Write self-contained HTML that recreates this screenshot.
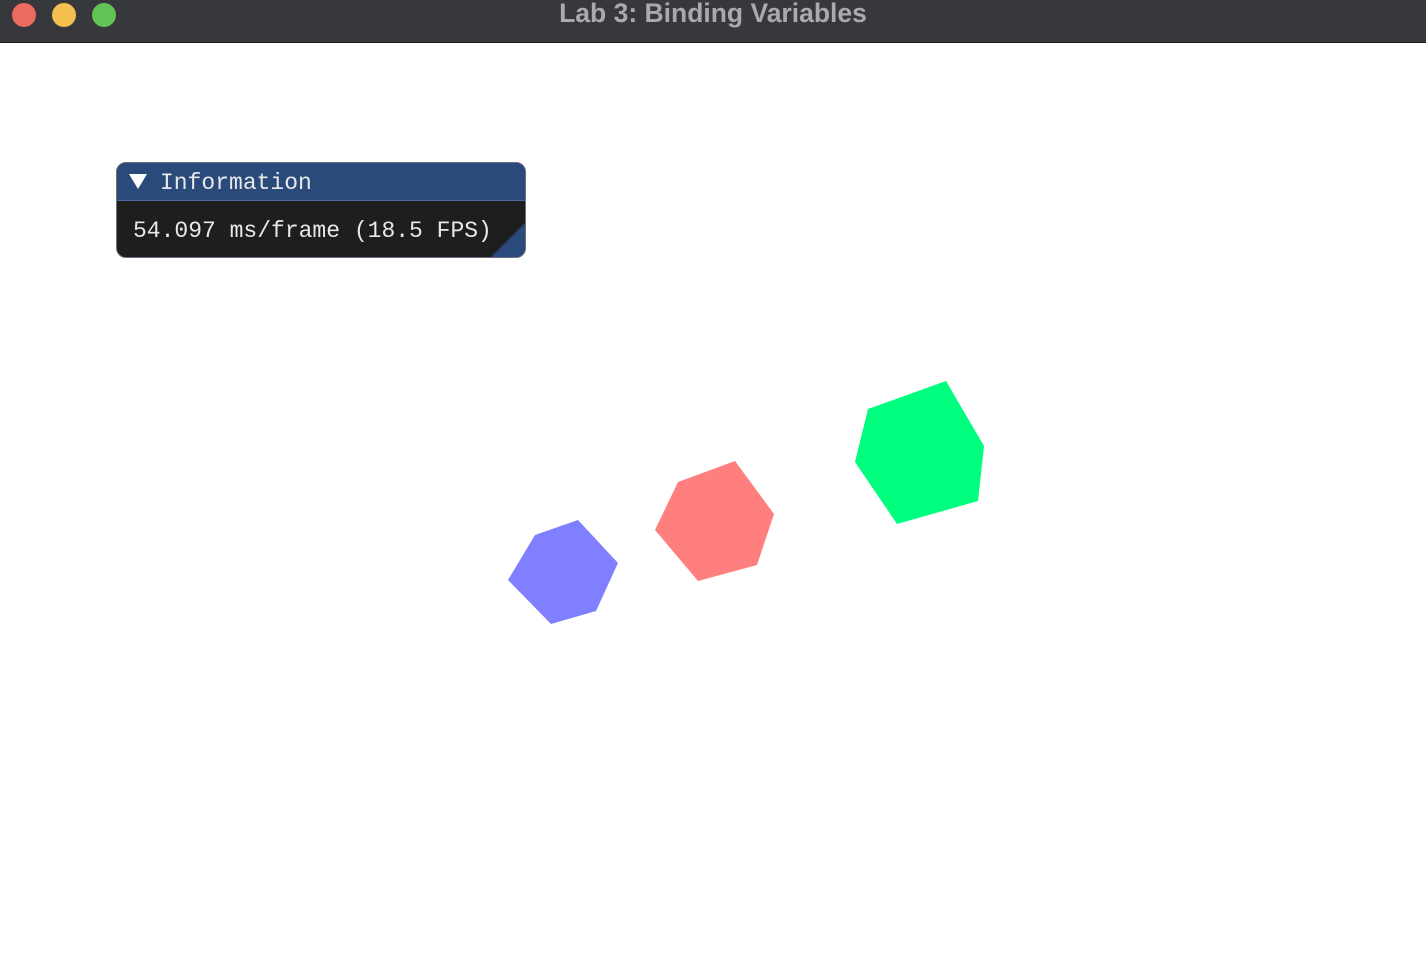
<!DOCTYPE html>
<html><head><style>
body{margin:0;width:1426px;height:964px;background:#fff;position:relative;overflow:hidden;font-family:"Liberation Sans",sans-serif}
.tb{position:absolute;left:0;top:0;width:1426px;height:42px;background:#37383c;border-bottom:1px solid #1a1a1a}
.dot{position:absolute;top:3px;width:24px;height:24px;border-radius:50%}
.title{position:absolute;top:-2px;left:0;width:1426px;text-align:center;color:#a9aaad;font-weight:bold;font-size:26.5px;line-height:30px}
.win{position:absolute;left:116px;top:162px;width:408px;height:94px;border:1px solid #6e6e80;border-radius:10px;background:#1e1e1e;overflow:hidden}
.hd{height:37px;background:#294a7a;border-bottom:1px solid #4a6aa0}
.mono{position:absolute;font-family:"Liberation Mono",monospace;font-size:23px;color:#e8e8e8;white-space:pre}
</style></head><body>
<div class="tb">
<div class="dot" style="left:12px;background:#ec6a5f"></div>
<div class="dot" style="left:52px;background:#f4bf4f"></div>
<div class="dot" style="left:92px;background:#61c454"></div>
<div class="title">Lab 3: Binding Variables</div>
</div>
<div class="win">
<div class="hd"></div>
<svg style="position:absolute;left:12px;top:11px" width="18" height="16"><polygon points="0,0 18,0 9,15" fill="#fff"/></svg>
<div class="mono" style="left:43px;top:7px">Information</div>
<div class="mono" style="left:16px;top:55px">54.097 ms/frame (18.5 FPS)</div>
<svg style="position:absolute;right:0;bottom:0" width="34" height="34"><polygon points="34,0 34,34 0,34" fill="#294a7a"/></svg>
</div>
<svg style="position:absolute;left:0;top:0" width="1426" height="964">
<polygon points="946,381 984,446 978,501 897,524 855,462 868,409" fill="#00ff7f"/>
<polygon points="735,461 774,514 757,565 698,581 655,530 678,482" fill="#ff7f7f"/>
<polygon points="578,520 618,563 596,611 551,624 508,580 535,535" fill="#7f7fff"/>
</svg>
</body></html>
